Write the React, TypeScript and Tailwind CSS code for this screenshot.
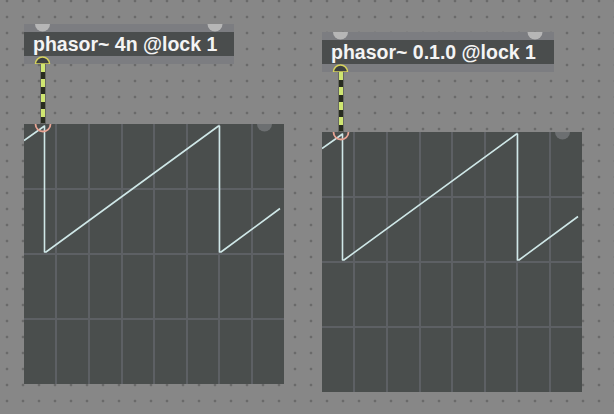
type Pt = [number, number];

// one sawtooth trace, scope-local coordinates (260x260)
const wave: Pt[] = [
  [0, 16.5],
  [20.5, 2],
  [20.5, 128],
  [22, 128],
  [194.5, 2],
  [195.5, 2],
  [195.5, 128],
  [197, 128],
  [256, 84.5],
];

const cols = [32, 65, 98, 130, 163, 195, 228];
const rows = [65, 130, 195];

const Scope = ({ left, top }: { left: number; top: number }) => {
  return (
    <div
      className="absolute w-[260px] h-[260px] bg-[#4a4e4d]"
      style={{ left, top }}
    >
      <svg width="260" height="260" className="block">
        {cols.map((x) => (
          <line key={"c" + x} x1={x} y1={0} x2={x} y2={260} stroke="#5d6064" strokeWidth={2} />
        ))}
        {rows.map((y) => (
          <line key={"r" + y} x1={0} y1={y} x2={260} y2={y} stroke="#5d6064" strokeWidth={2} />
        ))}
        <path d="M233 0 A7.5 7.5 0 0 0 248 0 Z" fill="#6c6f71" />
        <polyline
          points={wave.map((p) => p.join(",")).join(" ")}
          fill="none"
          stroke="#cfe7e7"
          strokeWidth={1.6}
          strokeLinejoin="round"
        />
        <path d="M11.5 0 A7.5 7.5 0 0 0 26.5 0" fill="none" stroke="#e9a494" strokeWidth={1.8} />
      </svg>
    </div>
  );
};

const PatchObject = ({
  left,
  top,
  width,
  text,
}: {
  left: number;
  top: number;
  width: number;
  text: string;
}) => {
  return (
    <div className="absolute flex flex-col" style={{ left, top, width }}>
      <div className="h-2 bg-[#7c7d81]" />
      <div className="h-6 bg-[#4a4d4d] pl-[9px] flex items-center">
        <span className="font-['Liberation_Sans',Arial,sans-serif] font-bold text-[19.5px] leading-6 text-[#f4f4f4] whitespace-nowrap">
          {text}
        </span>
      </div>
      <div className="h-2 bg-[#7c7d81]" />
      <svg width={width} height="40" className="absolute left-0 top-0 pointer-events-none">
        <path d="M11 0 A7.5 7.5 0 0 0 26 0 Z" fill="#b6b6b6" />
        <path d={`M${width - 26.5} 0 A7.5 7.5 0 0 0 ${width - 11.5} 0 Z`} fill="#b6b6b6" />
        <path d="M11.5 40 A7 7 0 0 1 25.5 40 Z" fill="#3d4040" stroke="#d7d35c" strokeWidth={1.6} />
      </svg>
    </div>
  );
};

const Cord = ({ left, top, height }: { left: number; top: number; height: number }) => {
  return (
    <div
      className="absolute w-[6px] border border-[#666763] bg-[repeating-linear-gradient(to_bottom,#cfe671_0px,#cfe671_8px,#272b1f_8px,#272b1f_15px)]"
      style={{ left, top, height }}
    />
  );
};

const App = () => {
  return (
    <main className="relative w-[614px] h-[414px] overflow-hidden bg-[#878787] bg-[radial-gradient(circle,#6a6a6a_1.1px,transparent_1.7px)] bg-[length:16px_16px] bg-[position:-1px_-7px]">
      <Cord left={40} top={63} height={61} />
      <Cord left={338} top={71} height={61} />
      <PatchObject left={24} top={24} width={210} text="phasor~ 4n @lock 1" />
      <PatchObject left={322} top={32} width={232} text="phasor~ 0.1.0 @lock 1" />
      <Scope left={24} top={124} />
      <Scope left={322} top={132} />
    </main>
  );
};

export default App;
